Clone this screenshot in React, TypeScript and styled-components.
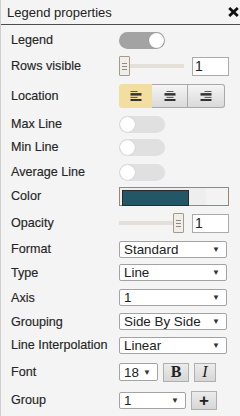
import React from 'react';
import styled, { createGlobalStyle } from 'styled-components';

const GlobalStyle = createGlobalStyle`
  html, body {
    margin: 0;
    padding: 0;
    background: #f4f4f4;
  }
  body {
    font-family: "Liberation Sans", Arial, sans-serif;
    color: #333;
  }
`;

const Panel = styled.div`
  width: 239px;
  height: 416px;
  background: #f4f4f4;
  border-left: 1px solid #cfcfcf;
  overflow: hidden;
`;

const Header = styled.div`
  height: 24px;
  display: flex;
  align-items: center;
  justify-content: space-between;
  padding: 0 1px 0 6px;
  border-bottom: 1px solid #4d4d4d;
`;

const Title = styled.span`
  font-size: 13px;
  color: #222;
`;

const Body = styled.div`
  padding: 1px 0 0 10px;
`;

const Row = styled.div<{ h: number }>`
  height: ${p => p.h}px;
  display: grid;
  grid-template-columns: 108px 1fr;
  align-items: center;
`;

const Label = styled.span`
  font-size: 12.6px;
  color: #262626;
  white-space: nowrap;
  -webkit-text-stroke: 0.15px #262626;
`;

const Controls = styled.div<{ gap?: number }>`
  display: flex;
  align-items: center;
  gap: ${p => p.gap ?? 0}px;
`;

const Track = styled.div<{ on?: boolean }>`
  width: 46px;
  height: 17px;
  border-radius: 9px;
  background: ${p => (p.on ? '#a3a3a3' : '#e0e0e0')};
  display: flex;
  align-items: center;
  justify-content: ${p => (p.on ? 'flex-end' : 'flex-start')};
  padding: 0 1px;
  box-sizing: border-box;
`;

const Knob = styled.div`
  width: 15px;
  height: 15px;
  border-radius: 50%;
  background: #fff;
  box-shadow: 0 0 1px rgba(0, 0, 0, 0.25);
`;

const SliderBox = styled.div`
  width: 65px;
  height: 20px;
  display: flex;
  align-items: center;
`;

const Rail = styled.div<{ grow: number }>`
  flex: ${p => p.grow} 1 0;
  height: 4px;
  background: #e4dfd8;
`;

const Handle = styled.div`
  width: 9px;
  height: 18px;
  border: 1px solid #a89a8b;
  border-radius: 1px;
  background: #f1ede8;
  display: flex;
  align-items: center;
  justify-content: center;
  flex-shrink: 0;
`;

const NumberBox = styled.div`
  width: 33px;
  height: 17px;
  border: 1px solid #ababab;
  background: #fff;
  font-size: 14px;
  line-height: 17px;
  padding-left: 2px;
  color: #222;
  box-sizing: content-box;
`;

const ButtonGroup = styled.div`
  display: flex;
  height: 24px;
`;

const AlignButton = styled.div<{ w: number; active?: boolean; last?: boolean; first?: boolean }>`
  width: ${p => p.w}px;
  height: 24px;
  box-sizing: border-box;
  display: flex;
  align-items: center;
  justify-content: center;
  background: ${p => (p.active ? '#f2dea1' : 'linear-gradient(#f5f5f5, #d9d9d9)')};
  border: 1px solid ${p => (p.active ? '#f2dea1' : '#a9a9a9')};
  border-left-width: ${p => (p.first ? 1 : 0)}px;
  border-radius: ${p => (p.first ? '3px 0 0 3px' : p.last ? '0 3px 3px 0' : '0')};
`;

const ColorBox = styled.div`
  width: 110px;
  height: 19px;
  border: 1px solid #9c8670;
  background: linear-gradient(90deg, #eeeeee 80%, #f3f3f3 80%);
  padding: 2px 0 0 2px;
  box-sizing: border-box;
  display: flex;
`;

const Swatch = styled.div<{ color: string }>`
  width: 67px;
  height: 16px;
  background: ${p => p.color};
  border: 1px solid #2a2a2a;
  box-sizing: border-box;
`;

const Select = styled.div<{ w: number; h?: number }>`
  width: ${p => p.w}px;
  height: ${p => p.h ?? 17}px;
  box-sizing: border-box;
  border: 1px solid #a3a3a3;
  border-radius: 2px;
  background: #fff;
  display: flex;
  align-items: center;
  justify-content: space-between;
  padding: 0 6px 0 4px;
  font-size: 13.4px;
  color: #222;
`;

const Arrow = styled.span`
  font-size: 8px;
  color: #333;
`;

const ToolButton = styled.div<{ w: number }>`
  width: ${p => p.w}px;
  height: 19px;
  box-sizing: border-box;
  border: 1px solid #b0b0b0;
  background: linear-gradient(#ececec, #d6d6d6);
  display: flex;
  align-items: center;
  justify-content: center;
  font-family: "Liberation Serif", "Times New Roman", serif;
  font-size: 16px;
  color: #222;
`;

const PlusGlyph = styled.b`
  font-family: "Liberation Sans", Arial, sans-serif;
  font-size: 17px;
  line-height: 1;
`;

const Toggle = ({ on }: { on?: boolean }) => (
  <Track on={on}>
    <Knob />
  </Track>
);

const Grip = () => (
  <svg width="5" height="7" viewBox="0 0 5 7">
    <path d="M0 0.5H5M0 3.5H5M0 6.5H5" stroke="#8a8a8a" strokeWidth="1" />
  </svg>
);

const Slider = ({ at }: { at: 'start' | 'end' }) => (
  <SliderBox>
    <Rail grow={at === 'end' ? 1 : 0} />
    <Handle>
      <Grip />
    </Handle>
    <Rail grow={at === 'start' ? 1 : 0} />
  </SliderBox>
);

const AlignIcon = ({ align }: { align: 'left' | 'center' | 'right' }) => {
  const rows = [
    [7, 0.8],
    [11, 2.5],
    [7, 0.8],
    [11, 2.5],
  ];
  let y = 0;
  return (
    <svg width="12" height="10" viewBox="0 0 12 10">
      {rows.map(([w, t], i) => {
        const x = align === 'left' ? 0.5 : align === 'right' ? 11.5 - w : (12 - w) / 2;
        const rect = <rect key={i} x={x} y={y} width={w} height={t} fill="#333" />;
        y += t + 1.3;
        return rect;
      })}
    </svg>
  );
};

const CloseIcon = () => (
  <svg width="11" height="10" viewBox="0 0 11 10">
    <path d="M1.2 1L9.8 9M9.8 1L1.2 9" stroke="#111" strokeWidth="2.8" />
  </svg>
);

const Dropdown = ({ w, h, value }: { w: number; h?: number; value: string }) => (
  <Select w={w} h={h}>
    <span>{value}</span>
    <Arrow>▼</Arrow>
  </Select>
);

export default function App() {
  return (
    <>
      <GlobalStyle />
      <Panel>
        <Header>
          <Title>Legend properties</Title>
          <CloseIcon />
        </Header>
        <Body>
          <Row h={28}>
            <Label>Legend</Label>
            <Toggle on />
          </Row>
          <Row h={24}>
            <Label>Rows visible</Label>
            <Controls gap={8}>
              <Slider at="start" />
              <NumberBox>1</NumberBox>
            </Controls>
          </Row>
          <Row h={36}>
            <Label>Location</Label>
            <ButtonGroup>
              <AlignButton w={33} active first>
                <AlignIcon align="left" />
              </AlignButton>
              <AlignButton w={36}>
                <AlignIcon align="center" />
              </AlignButton>
              <AlignButton w={37} last>
                <AlignIcon align="right" />
              </AlignButton>
            </ButtonGroup>
          </Row>
          <Row h={20}>
            <Label>Max Line</Label>
            <Toggle />
          </Row>
          <Row h={26}>
            <Label>Min Line</Label>
            <Toggle />
          </Row>
          <Row h={24}>
            <Label>Average Line</Label>
            <Toggle />
          </Row>
          <Row h={24}>
            <Label>Color</Label>
            <ColorBox>
              <Swatch color="#245766" />
            </ColorBox>
          </Row>
          <Row h={30}>
            <Label>Opacity</Label>
            <Controls gap={8}>
              <Slider at="end" />
              <NumberBox>1</NumberBox>
            </Controls>
          </Row>
          <Row h={22}>
            <Label>Format</Label>
            <Dropdown w={108} value="Standard" />
          </Row>
          <Row h={25}>
            <Label>Type</Label>
            <Dropdown w={108} value="Line" />
          </Row>
          <Row h={25}>
            <Label>Axis</Label>
            <Dropdown w={108} value="1" />
          </Row>
          <Row h={23}>
            <Label>Grouping</Label>
            <Dropdown w={108} value="Side By Side" />
          </Row>
          <Row h={24}>
            <Label>Line Interpolation</Label>
            <Dropdown w={108} value="Linear" />
          </Row>
          <Row h={30}>
            <Label>Font</Label>
            <Controls gap={5}>
              <Dropdown w={39} h={18} value="18" />
              <ToolButton w={26}>
                <b>B</b>
              </ToolButton>
              <ToolButton w={22}>
                <i>I</i>
              </ToolButton>
            </Controls>
          </Row>
          <Row h={26}>
            <Label>Group</Label>
            <Controls gap={5}>
              <Dropdown w={67} value="1" />
              <ToolButton w={26}>
                <PlusGlyph>+</PlusGlyph>
              </ToolButton>
            </Controls>
          </Row>
        </Body>
      </Panel>
    </>
  );
}
